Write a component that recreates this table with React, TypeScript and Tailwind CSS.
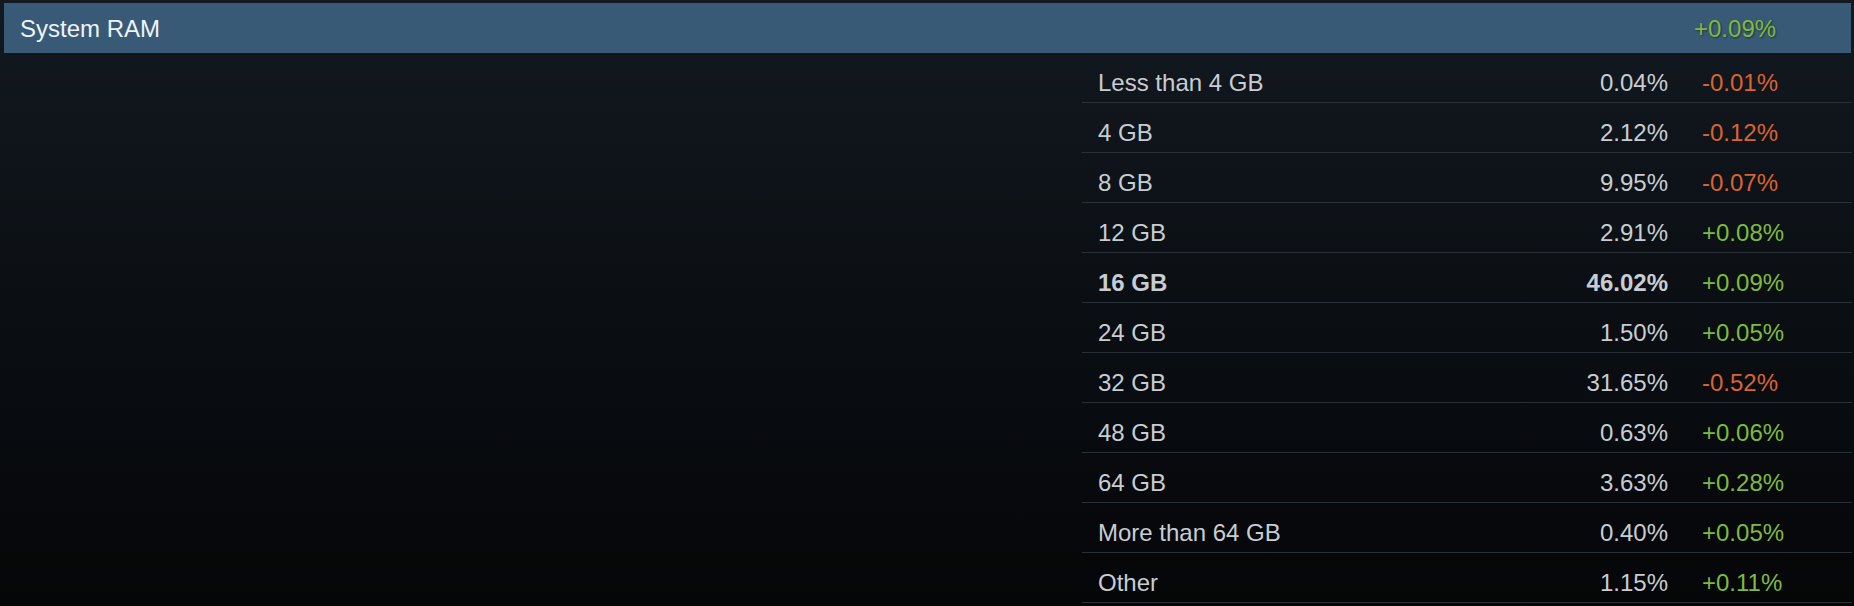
const rows = [
  { label: 'Less than 4 GB', pct: '0.04%', change: '-0.01%' },
  { label: '4 GB', pct: '2.12%', change: '-0.12%' },
  { label: '8 GB', pct: '9.95%', change: '-0.07%' },
  { label: '12 GB', pct: '2.91%', change: '+0.08%' },
  { label: '16 GB', pct: '46.02%', change: '+0.09%', bold: true },
  { label: '24 GB', pct: '1.50%', change: '+0.05%' },
  { label: '32 GB', pct: '31.65%', change: '-0.52%' },
  { label: '48 GB', pct: '0.63%', change: '+0.06%' },
  { label: '64 GB', pct: '3.63%', change: '+0.28%' },
  { label: 'More than 64 GB', pct: '0.40%', change: '+0.05%' },
  { label: 'Other', pct: '1.15%', change: '+0.11%' },
];

export default function App() {
  return (
    <div
      className="w-[1854px] h-[606px] overflow-hidden bg-gradient-to-b from-[#121920] to-[#050608] pt-[3px] text-[24px] leading-[28px]"
      style={{ fontFamily: '"Liberation Sans", Arial, sans-serif' }}
    >
      <div className="ml-[4px] mr-[3px] h-[50px] bg-[#395a76] flex items-start pt-[12px] pl-[16px]">
        <span className="text-[#eef3f7] flex-1">System RAM</span>
        <span className="w-[157px] text-[#7dbb3c] [text-shadow:1px_1px_2px_rgba(0,0,0,0.45)]">+0.09%</span>
      </div>
      <div className="flex">
        <div className="w-[1082px]" />
        <div className="w-[770px]">
          {rows.map((r) => (
            <div
              key={r.label}
              className={`h-[50px] flex items-start pt-[16px] border-b border-[#2a3037] ${r.bold ? 'font-bold' : ''}`}
            >
              <span className="flex-1 pl-[16px] text-[#c7cdd2]">{r.label}</span>
              <span className="text-right text-[#c7cdd2]">{r.pct}</span>
              <span
                className={`w-[184px] pl-[34px] font-normal ${r.change.startsWith('-') ? 'text-[#dc6230]' : 'text-[#7dbb3c]'}`}
              >
                {r.change}
              </span>
            </div>
          ))}
        </div>
      </div>
    </div>
  );
}
